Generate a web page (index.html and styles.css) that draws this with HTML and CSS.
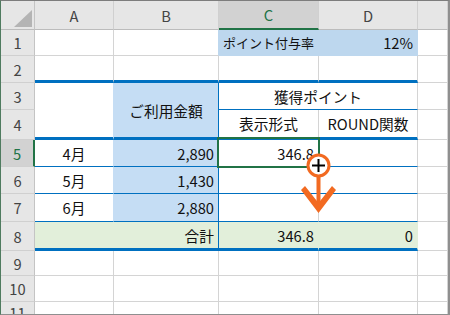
FILE: index.html
```html
<!DOCTYPE html>
<html lang="ja">
<head>
  <meta charset="UTF-8" />
  <title>ポイント計算</title>
  <link rel="stylesheet" href="styles.css">
</head>
<body>

  <div class="window">
    <div class="sheet">
      <!-- column headers -->
      <div class="corner"><div class="corner-mark"></div></div>
      <div class="col-hd">A</div>
      <div class="col-hd">B</div>
      <div class="col-hd active">C</div>
      <div class="col-hd">D</div>
      <div class="col-hd"></div>

      <!-- row 1: rate -->
      <div class="row-hd">1</div>
      <div class="cell"></div>
      <div class="cell before-rate"></div>
      <div class="cell rate rate-label">ポイント付与率</div>
      <div class="cell rate num">12%</div>
      <div class="cell"></div>

      <!-- row 2 -->
      <div class="row-hd">2</div>
      <div class="cell thick"></div>
      <div class="cell thick"></div>
      <div class="cell thick"></div>
      <div class="cell thick"></div>
      <div class="cell"></div>

      <!-- rows 3-4: table head -->
      <div class="row-hd">3</div>
      <div class="cell two-rows before-amount thick"></div>
      <div class="cell two-rows amount blue-right thick center">ご利用金額</div>
      <div class="cell two-cols blue-bottom center">獲得ポイント</div>
      <div class="cell"></div>

      <div class="row-hd">4</div>
      <div class="cell thick center">表示形式</div>
      <div class="cell thick center">ROUND関数</div>
      <div class="cell"></div>

      <!-- rows 5-7: months -->
      <div class="row-hd active">5</div>
      <div class="cell before-amount blue-bottom center">4月</div>
      <div class="cell amount blue-right blue-bottom num">2,890</div>
      <div class="cell blue-bottom num selected">346.8</div>
      <div class="cell blue-bottom"></div>
      <div class="cell"></div>

      <div class="row-hd">6</div>
      <div class="cell before-amount blue-bottom center">5月</div>
      <div class="cell amount blue-right blue-bottom num">1,430</div>
      <div class="cell blue-bottom"></div>
      <div class="cell blue-bottom"></div>
      <div class="cell"></div>

      <div class="row-hd">7</div>
      <div class="cell before-amount blue-bottom center">6月</div>
      <div class="cell amount blue-right blue-bottom num">2,880</div>
      <div class="cell blue-bottom"></div>
      <div class="cell blue-bottom"></div>
      <div class="cell"></div>

      <!-- row 8: total -->
      <div class="row-hd">8</div>
      <div class="cell two-cols total blue-right thick num">合計</div>
      <div class="cell total total-edge thick num">346.8</div>
      <div class="cell total total-edge thick num">0</div>
      <div class="cell"></div>

      <div class="row-hd">9</div>
      <div class="cell"></div><div class="cell"></div><div class="cell"></div><div class="cell"></div><div class="cell"></div>

      <div class="row-hd">10</div>
      <div class="cell"></div><div class="cell"></div><div class="cell"></div><div class="cell"></div><div class="cell"></div>

      <div class="row-hd">11</div>
      <div class="cell"></div><div class="cell"></div><div class="cell"></div><div class="cell"></div><div class="cell"></div>
    </div>

    <!-- fill handle drag hint -->
    <svg class="drag-hint" viewBox="1 1 447 313" width="447" height="313">
      <rect x="316.5" y="176" width="4" height="29" fill="#f26a21"/>
      <polygon points="301,190 305,186 318.5,203 332,186 336,190 318.5,213" fill="#f26a21"/>
      <circle cx="318.5" cy="165.5" r="10.5" fill="#fff" stroke="#f26a21" stroke-width="3"/>
      <path d="M312 165.5H325M318.5 159V172" stroke="#fff" stroke-width="4"/>
      <path d="M312 165.5H325M318.5 159V172" stroke="#000" stroke-width="2"/>
    </svg>
  </div>

</body>
</html>
```

FILE: styles.css
```css
body {
  margin: 0;
  background: #fff;
  font-family: "Noto Sans CJK JP", "Noto Sans", sans-serif;
}

.window {
  position: relative;
  width: 450px;
  height: 315px;
  box-sizing: border-box;
  border-top: 1px solid #7d7d7d;
  border-left: 1px solid #4f7b5f;
  border-right: 2px solid #8f8f8f;
  border-bottom: 1px solid #8f8f8f;
  overflow: hidden;
}

.sheet {
  display: grid;
  grid-template-columns: 34px 79px 105px 100px 99px 1fr;
  grid-template-rows: 29px 26px 27px 27px 30px 27px 27px 28px 29px 25px 26px 1fr;
  height: 100%;
  font-size: 14.7px;
}

/* headers */
.corner, .col-hd, .row-hd {
  box-sizing: border-box;
  background: #e6e6e6;
  color: #444;
  display: flex;
  align-items: center;
  justify-content: center;
}

.corner {
  border-right: 1px solid #c4c4c4;
  border-bottom: 1px solid #bcbcbc;
  align-items: flex-end;
  justify-content: flex-end;
  padding: 0 2px 2px 0;
}

.corner-mark {
  width: 18px;
  height: 17px;
  background: #b4b4b4;
  clip-path: polygon(100% 0, 100% 100%, 0 100%);
}

.col-hd {
  border-right: 1px solid #d0d0d0;
  border-bottom: 1px solid #bcbcbc;
}

.row-hd {
  border-right: 1px solid #c4c4c4;
  border-bottom: 1px solid #d0d0d0;
}

.col-hd.active {
  background: #d2d2d2;
  color: #217346;
  border-bottom: 2px solid #217346;
}

.row-hd.active {
  background: #d2d2d2;
  color: #217346;
  border-right: 2px solid #217346;
}

/* cells */
.cell {
  box-sizing: border-box;
  border-right: 1px solid #d4d4d4;
  border-bottom: 1px solid #d4d4d4;
  display: flex;
  align-items: center;
  padding: 0 4px;
  white-space: nowrap;
  color: #111;
}

.num { justify-content: flex-end; }
.center { justify-content: center; }

.two-rows { grid-row: span 2; }
.two-cols { grid-column: span 2; }

/* fills hide the gridlines around them */
.rate {
  background: #bdd7ee;
  border-right-color: #bdd7ee;
  border-bottom-color: #bdd7ee;
}
.rate-label { font-size: 13px; }
.before-rate { border-right-color: #bdd7ee; }

.amount { background: #c5ddf4; }
.before-amount { border-right-color: #c5ddf4; }

.total { background: #e2efda; }
.total-edge { border-right-color: #e2efda; }

.blue-right { border-right-color: #0070c0; }
.blue-bottom { border-bottom-color: #0070c0; }
.thick { border-bottom: 3px solid #0070c0; }

/* active cell frame */
.selected { position: relative; }

.selected::after {
  content: "";
  position: absolute;
  left: -2px;
  top: -3px;
  right: -2px;
  bottom: -2px;
  border: 2px solid #217346;
}

.drag-hint {
  position: absolute;
  top: 0;
  left: 0;
}
```
